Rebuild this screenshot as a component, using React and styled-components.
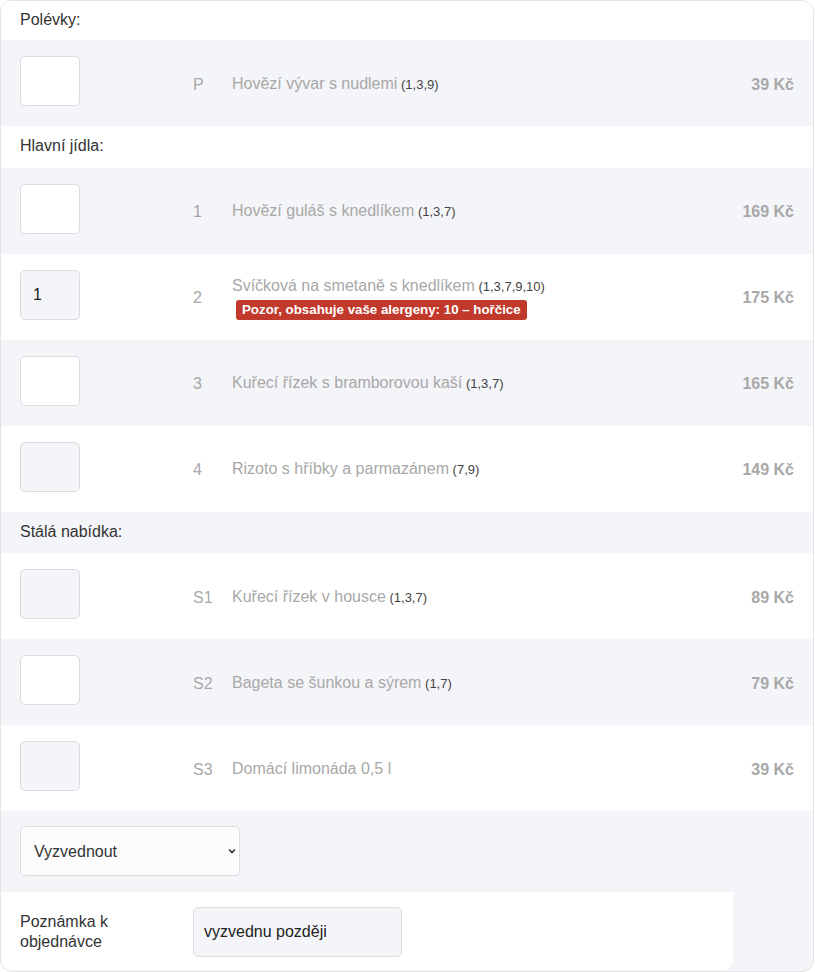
import React, { useState } from "react";
import styled, { createGlobalStyle } from "styled-components";

const GlobalStyle = createGlobalStyle`
  html, body {
    margin: 0;
    padding: 0;
    background: #ffffff;
  }
  body {
    font-family: "Liberation Sans", Arial, sans-serif;
  }
  * {
    box-sizing: border-box;
  }
`;

const menu = [
  {
    title: "Polévky:",
    items: [{ code: "P", name: "Hovězí vývar s nudlemi", allergens: "1,3,9", price: 39 }],
  },
  {
    title: "Hlavní jídla:",
    items: [
      { code: "1", name: "Hovězí guláš s knedlíkem", allergens: "1,3,7", price: 169 },
      {
        code: "2",
        name: "Svíčková na smetaně s knedlíkem",
        allergens: "1,3,7,9,10",
        price: 175,
        warning: "Pozor, obsahuje vaše alergeny: 10 – hořčice",
        qty: "1",
      },
      { code: "3", name: "Kuřecí řízek s bramborovou kaší", allergens: "1,3,7", price: 165 },
      { code: "4", name: "Rizoto s hříbky a parmazánem", allergens: "7,9", price: 149 },
    ],
  },
  {
    title: "Stálá nabídka:",
    items: [
      { code: "S1", name: "Kuřecí řízek v housce", allergens: "1,3,7", price: 89 },
      { code: "S2", name: "Bageta se šunkou a sýrem", allergens: "1,7", price: 79 },
      { code: "S3", name: "Domácí limonáda 0,5 l", price: 39 },
    ],
  },
];

const App = () => {
  const [note, setNote] = useState("vyzvednu později");
  const [delivery, setDelivery] = useState("pickup");

  // striping runs through headers and items alike
  let index = 0;
  const rows = [];
  menu.forEach((section) => {
    index += 1;
    rows.push(
      <SectionRow key={section.title} $odd={index % 2 === 1}>
        {section.title}
      </SectionRow>
    );
    section.items.forEach((item) => {
      index += 1;
      const odd = index % 2 === 1;
      rows.push(
        <ItemRow key={item.code} $odd={odd}>
          <QtyInput $odd={odd} defaultValue={item.qty || ""} />
          <Code>{item.code}</Code>
          <NameCell>
            <Name>
              {item.name}
              {item.allergens && <Allergens> ({item.allergens})</Allergens>}
            </Name>
            {item.warning && <Warning>{item.warning}</Warning>}
          </NameCell>
          <Price>{item.price} Kč</Price>
        </ItemRow>
      );
    });
  });

  return (
    <>
      <GlobalStyle />
      <Card>
        {rows}
        <Footer>
          <SelectRow>
            <SelectWrap>
              <Select value={delivery} onChange={(e) => setDelivery(e.target.value)}>
                <option value="pickup">Vyzvednout</option>
                <option value="delivery">Doručit</option>
              </Select>
              <Chevron viewBox="0 0 10 10" aria-hidden="true">
                <path d="M2 3.5 L5 6.5 L8 3.5" />
              </Chevron>
            </SelectWrap>
          </SelectRow>
          <NoteRow>
            <NoteLabel>Poznámka k objednávce</NoteLabel>
            <NoteInput value={note} onChange={(e) => setNote(e.target.value)} />
          </NoteRow>
        </Footer>
      </Card>
    </>
  );
};

const Card = styled.div`
  width: 814px;
  background: #f4f5f8;
  border: 1px solid #e4e4e7;
  border-radius: 12px;
  overflow: hidden;
  padding-bottom: 1px;
`;

const SectionRow = styled.div`
  display: flex;
  align-items: center;
  height: 41.5px;
  padding: 0 19px 1px;
  background: ${(p) => (p.$odd ? "#ffffff" : "#f4f5f8")};
  color: #333333;
  font-size: 16px;

  &:first-child {
    height: 39px;
  }
`;

const ItemRow = styled.div`
  display: grid;
  grid-template-columns: 173px 39px 1fr auto;
  align-items: center;
  height: 86px;
  padding: 0 19px;
  background: ${(p) => (p.$odd ? "#ffffff" : "#f4f5f8")};
  font-size: 16px;
`;

const QtyInput = styled.input`
  align-self: start;
  margin-top: 16px;
  width: 60px;
  height: 50px;
  border: 1px solid #dcdcdf;
  border-radius: 5px;
  background: ${(p) => (p.$odd ? "#f4f5f8" : "#ffffff")};
  padding: 0 12px;
  font-family: "Liberation Sans", Arial, sans-serif;
  font-size: 16px;
  color: #222222;
  outline: none;
`;

const Code = styled.span`
  color: #a8a8a8;
  padding-top: 3px;
`;

const NameCell = styled.div`
  color: #a8a8a8;
  padding-top: 2px;
`;

const Name = styled.div`
  line-height: 20px;
`;

const Allergens = styled.span`
  font-size: 13px;
  color: #444444;
`;

const Warning = styled.span`
  display: inline-block;
  margin: 3px 0 0 4px;
  padding: 0 6px;
  height: 20px;
  line-height: 20px;
  border-radius: 3px;
  background: #c0392b;
  color: #ffffff;
  font-size: 13.3px;
  font-weight: bold;
`;

const Price = styled.span`
  color: #a8a8a8;
  font-weight: bold;
  font-size: 16px;
  padding-top: 3px;
`;

const Footer = styled.div`
  width: 732px;
`;

const SelectRow = styled.div`
  background: #f4f5f8;
  padding: 15px 19px 16px;
`;

const SelectWrap = styled.div`
  position: relative;
  width: 220px;
  height: 50px;
`;

const Select = styled.select`
  appearance: none;
  width: 100%;
  height: 100%;
  border: 1px solid #dcdcdf;
  border-radius: 5px;
  background: #fcfcfd;
  padding: 0 13px;
  font-family: "Liberation Sans", Arial, sans-serif;
  font-size: 16px;
  color: #333333;
  outline: none;
`;

const Chevron = styled.svg`
  position: absolute;
  right: 3px;
  top: 20px;
  width: 10px;
  height: 10px;
  fill: none;
  stroke: #333333;
  stroke-width: 1.6;
  pointer-events: none;
`;

const NoteRow = styled.div`
  display: grid;
  grid-template-columns: 173px auto;
  align-items: center;
  background: #ffffff;
  padding: 15px 19px 13px;
  border-radius: 0 0 10px 10px;
`;

const NoteLabel = styled.label`
  max-width: 120px;
  font-size: 16px;
  line-height: 20px;
  color: #333333;
`;

const NoteInput = styled.input`
  width: 209px;
  height: 50px;
  border: 1px solid #dcdcdf;
  border-radius: 5px;
  background: #f4f5f8;
  padding: 0 10px;
  font-family: "Liberation Sans", Arial, sans-serif;
  font-size: 16px;
  color: #222222;
  outline: none;
`;

export default App;
